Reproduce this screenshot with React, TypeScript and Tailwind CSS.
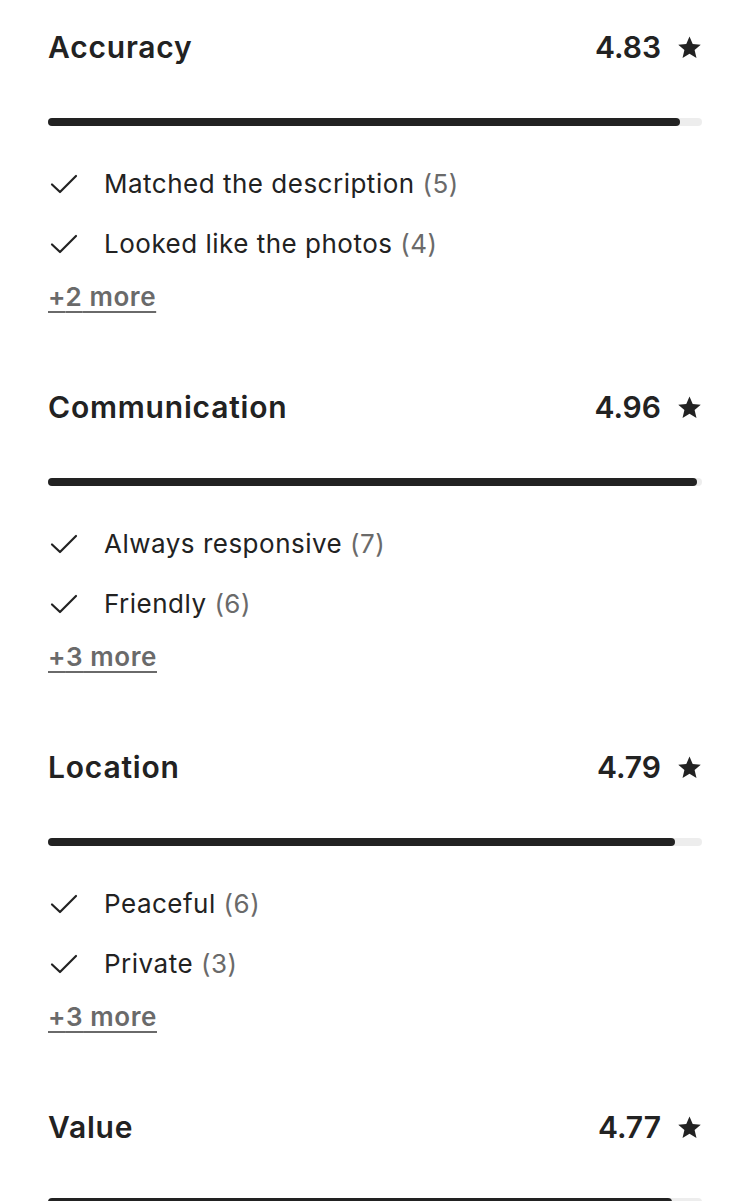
const sections = [
  {
    title: "Accuracy",
    score: "4.83",
    fill: 632,
    tags: [
      { label: "Matched the description", count: 5 },
      { label: "Looked like the photos", count: 4 },
    ],
    more: 2,
  },
  {
    title: "Communication",
    score: "4.96",
    fill: 649,
    tags: [
      { label: "Always responsive", count: 7 },
      { label: "Friendly", count: 6 },
    ],
    more: 3,
  },
  {
    title: "Location",
    score: "4.79",
    fill: 627,
    tags: [
      { label: "Peaceful", count: 6 },
      { label: "Private", count: 3 },
    ],
    more: 3,
  },
  {
    title: "Value",
    score: "4.77",
    fill: 624,
    tags: [],
    more: 0,
  },
];

function Check() {
  return (
    <svg width="28" height="20" viewBox="0 0 28 20" fill="none" className="shrink-0">
      <path d="M2 10.5l8 7.5L26 2" stroke="#222" strokeWidth="2.2" strokeLinecap="round" strokeLinejoin="round" />
    </svg>
  );
}

function Star() {
  return (
    <svg width="25" height="25" viewBox="0 0 24 24" className="shrink-0">
      <path d="M12 1.5l3.1 7.2 7.7.6-5.9 5.1 1.8 7.6L12 17.9 5.3 22l1.8-7.6-5.9-5.1 7.7-.6z" fill="#222" />
    </svg>
  );
}

export default function App() {
  return (
    <div className="w-[750px] h-[1201px] overflow-hidden bg-white px-12 pt-[29px] text-[#222] font-['Inter','Liberation_Sans',sans-serif]">
      {sections.map((s) => (
        <section key={s.title} className="mb-[74px]">
          <div className="flex items-center justify-between h-9">
            <h2 className="text-[30px] font-semibold tracking-[0.8px] leading-9">{s.title}</h2>
            <div className="flex items-center gap-4">
              <span className="text-[30px] font-semibold leading-9">{s.score}</span>
              <Star />
            </div>
          </div>
          <div className="mt-[53px] h-2 w-full rounded-full bg-[#ededed]">
            <div className="h-2 rounded-full bg-[#222]" style={{ width: s.fill }} />
          </div>
          {s.tags.length > 0 && (
            <ul className="mt-10 flex flex-col gap-6">
              {s.tags.map((t) => (
                <li key={t.label} className="flex items-center h-9">
                  <span className="w-14 pl-0.5">
                    <Check />
                  </span>
                  <span className="text-[26px] leading-9 tracking-[0.5px]">
                    {t.label} <span className="text-[#6a6a6a]">({t.count})</span>
                  </span>
                </li>
              ))}
            </ul>
          )}
          {s.more > 0 && (
            <div className="mt-[17px] h-9">
              <span className="text-[26px] font-semibold leading-9 tracking-[0.6px] text-[#6a6a6a] underline decoration-2 underline-offset-[5px]">
                +{s.more} more
              </span>
            </div>
          )}
        </section>
      ))}
    </div>
  );
}
